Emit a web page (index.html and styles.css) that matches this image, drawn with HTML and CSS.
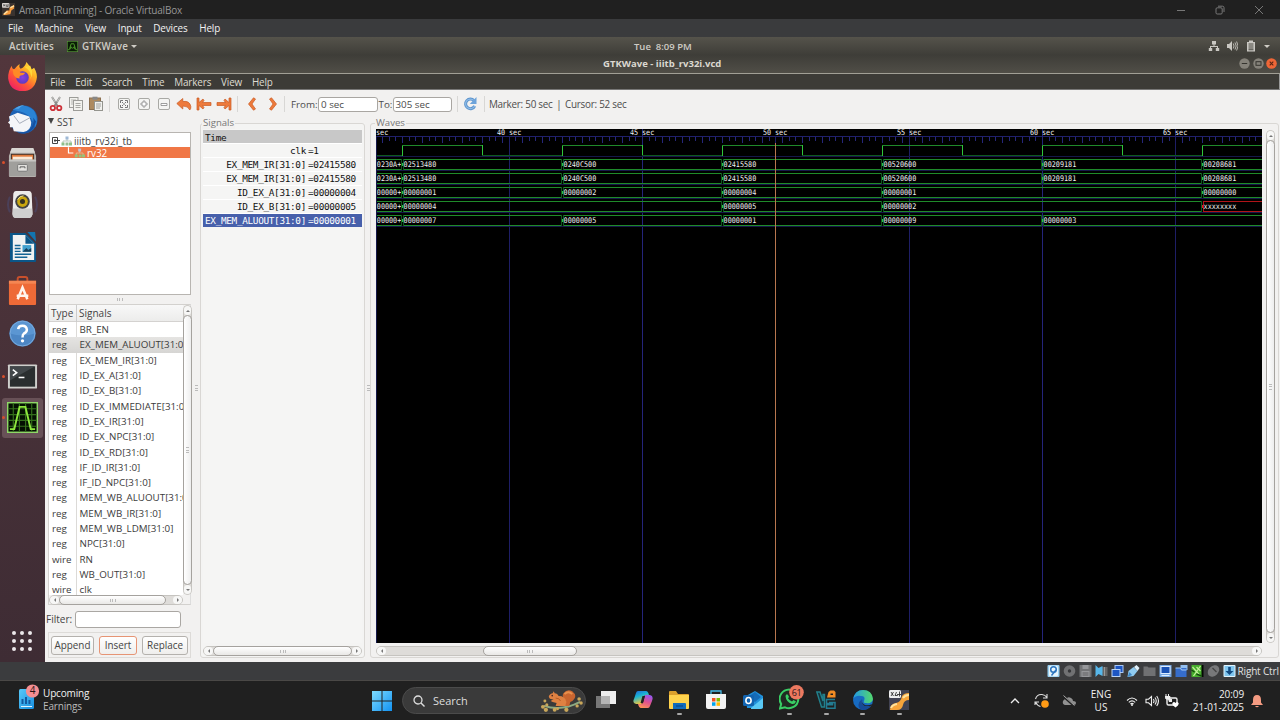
FILE: index.html
```html
<!DOCTYPE html>
<html lang="en">
<head>
<meta charset="utf-8">
<title>Amaan [Running] - Oracle VirtualBox</title>
<link rel="stylesheet" href="styles.css">
</head>
<body>
<header class="vm-title">
  <svg class="vm-logo" viewBox="0 0 14 14"><rect width="14" height="14" fill="#3a332f"/><path d="M1 13 5 8 8 8 8 5 13 2V6L10 8 9 12 4 13Z" fill="#f59a3c"/><path d="M2 12 6 9M9 5 13 3" stroke="#ffe0a0" stroke-width="1.5"/><rect width="8" height="5" rx="1" fill="#d8d4d0"/><path d="M1.5 1.5 3 3.5M3 1.5 1.500 3.500M4.500 1.500v2h2M6.500 1v3" stroke="#333" stroke-width=".8" fill="none"/></svg>
  <span class="vm-title-text">Amaan [Running] - Oracle VirtualBox</span>
  <div class="vm-controls">
    <svg viewBox="0 0 10 10"><path d="M1 5.500h8"/></svg>
    <svg viewBox="0 0 10 10"><rect x="1" y="2.800" width="6.200" height="6.200" rx="1.200"/><path d="M3 1.200h4.500q1.500 0 1.500 1.500v4.300"/></svg>
    <svg viewBox="0 0 10 10"><path d="M1 1l8 8M9 1l-8 8"/></svg>
  </div>
</header>
<nav class="vm-menu"><span>File</span><span>Machine</span><span>View</span><span>Input</span><span>Devices</span><span>Help</span></nav>

<div class="gnome-bar">
  <span class="activities">Activities</span>
  <svg class="gw-mini" viewBox="0 0 12 12"><rect width="12" height="12" fill="#5c9a3c"/><rect x=".7" y=".7" width="10.600" height="10.600" fill="#0a1c06"/><path d="M1 9.500h1.500L4.500 3h3l2 6.500H11M4 9V6l2 2 2-2v3" fill="none" stroke="#4f9a2c"/></svg>
  <span class="app-name">GTKWave</span><i class="caret"></i>
  <span class="clock">Tue&nbsp; 8:09 PM</span>
  <div class="gnome-tray">
    <svg viewBox="0 0 12 12"><path d="M4 1h4v3.500H4zM.8 8h3.400v3H.8zM7.800 8h3.400v3H7.800zM5.500 4h1v2.500h-1zM2 6h8v1H2zM2 6h1v2H2zM9 6h1v2H9z"/></svg>
    <svg viewBox="0 0 12 12"><path d="M1 4h2l3-3v10L3 8H1z"/><path d="M7.300 3.500q1.500 2.500 0 5M9 2.500q2.400 3.500 0 7M10.600 1.500q3 4.500 0 9" fill="none" stroke="#c9c7c2" stroke-width=".9"/></svg>
    <svg viewBox="0 0 12 12"><path d="M2 2h2V.6h4V2h2v9.600H2zM3.500 3.500v1h5v-1zM3.500 5.500v1h5v-1zM3.500 7.500v1h5v-1zM3.500 9.300v1h5v-1z" fill-rule="evenodd"/></svg>
    <i class="caret"></i>
  </div>
</div>

<main class="desktop">
  <aside class="dock">
    <div class="dock-item"><svg viewBox="0 0 32 32">
      <defs><linearGradient id="ff" x1="1" y1="0" x2=".2" y2="1"><stop offset="0" stop-color="#fff14d"/><stop offset=".35" stop-color="#ffb023"/><stop offset=".65" stop-color="#ff5a35"/><stop offset="1" stop-color="#ef1c68"/></linearGradient><radialGradient id="ffp"><stop offset="0" stop-color="#8a3fe0"/><stop offset="1" stop-color="#5f3bc0"/></radialGradient></defs>
      <path d="M20 1q4 4 5 8l3-2q4 7 2.500 12Q28 31 16 31 3 31 1.200 18 1 10 5 5q0 4 3 3 2-3 5-5-1 3 1 5 5-2 6-7Z" fill="url(#ff)"/><circle cx="16" cy="17" r="6.500" fill="url(#ffp)"/><path d="M6 9q5-1 8 3h5q-2 3-5 3-2 1-1 3-7 0-7-9Z" fill="#ff8a26"/><path d="M18 6q9 5 6 13 4-6 0-14Z" fill="#ffd83a"/></svg></div>
    <div class="dock-item"><svg viewBox="0 0 32 32">
      <circle cx="17" cy="16" r="14.500" fill="#1d62b4"/><path d="M6 6Q17-3 28 7q5 9 1 17-4-15-19-17Z" fill="#2a83d5"/><path d="M8 5Q13 1 18 1q-4 1-6 4Z" fill="#55a6e6"/><path d="m2 13 1 4-2 2 2 2 0 3 3 0 1 4 10 1q8-2 8-10l-2-6-12-4Z" fill="#f4f5f8"/><path d="m7 12 6 8 11-6" fill="none" stroke="#a3a9b8"/><path d="M27 14q2 9-7 15l-9 1q15 3 19-12Z" fill="#1550a0"/></svg></div>
    <div class="dock-item run"><svg viewBox="0 0 32 32">
      <path d="M5 1h22l3 8v21q0 1-1 1H3q-1 0-1-1V9Z" fill="#b6b4b0"/><path d="M5 1h22l2 5H3Z" fill="#d8d6d2"/><rect x="4" y="7" width="24" height="8" fill="#3d302a"/><path d="M5 8h22v7H5z" fill="#e07a3c"/><path d="M6 10h20v5H6z" fill="#fbe9d6"/><path d="M2 13h28v17H2z" fill="#a09f9c"/><path d="M2 13h28v2H2z" fill="#c6c5c2"/><rect x="11" y="18" width="10" height="7" rx="1" fill="#e4e3e0" stroke="#777"/><path d="M13.500 22v-1.500h5V22" fill="none" stroke="#555"/></svg></div>
    <div class="dock-item"><svg viewBox="0 0 32 32">
      <path d="M3 8q-4 8 0 16M29 8q4 8 0 16" stroke="#4b4059" stroke-width="2" fill="none"/><path d="M9 2h14q2 0 2.500 3l.8 20q0 4-4 5H9.700q-4-1-4-5l.8-20Q7 2 9 2Z" fill="#ececea"/><path d="M6 20h20l.3 6q-1 4-4 4H9.700q-4 0-4-4Z" fill="#cfcfcf"/><circle cx="16" cy="13" r="7.500" fill="#424344"/><circle cx="16" cy="13" r="5.500" fill="#c9a60e"/><circle cx="16" cy="13" r="2.600" fill="#363222"/><path d="M11 11q2-4 6-4" stroke="#f6e68a" fill="none"/></svg></div>
    <div class="dock-item"><svg viewBox="0 0 32 32">
      <path d="M3 1h16l11 11v18q0 1-1 1H3z" fill="#0b5688"/><path d="M21 0h8l1 10Z" fill="#1275b0"/><path d="M6 3h13l9 9v17H6z" fill="#f0f2f2"/><path d="M19 3v9h9Z" fill="#0b5688"/><path d="M8 14h6M8 17h6M8 20h6M8 23h17M8 26h13" stroke="#116394" stroke-width="1.500"/><rect x="16" y="13.500" width="9" height="7" fill="#42a1cf"/><path d="m16 20.500 4-4 2 2 3-2v4z" fill="#16415e"/></svg></div>
    <div class="dock-item"><svg viewBox="0 0 32 32">
      <path d="M11 9V4q0-2 2-2h6q2 0 2 2v5" fill="none" stroke="#c8502c" stroke-width="2"/><path d="M2 6h28v24q0 1-1 1H3q-1 0-1-1Z" fill="#ee6a37"/><path d="M2 6h28v3H2z" fill="#f58653"/><path d="m11 25 5-12 5 12M10 21.500h12" fill="none" stroke="#fff4ec" stroke-width="2.600"/></svg></div>
    <div class="dock-item"><svg viewBox="0 0 32 32">
      <circle cx="16" cy="16" r="13.500" fill="#4c86c4"/><path d="M3 16a13 13 0 0 1 26 0q-13 4-26 0Z" fill="#5b96d2"/><circle cx="16" cy="16" r="12.800" fill="none" stroke="#79aadd"/><path d="M11.500 11.500Q12 8 16 8t4.500 4q0 2.500-3 4-1.500 1-1.500 4" fill="none" stroke="#fff" stroke-width="2.600"/><circle cx="16" cy="23.600" r="1.700" fill="#fff"/></svg></div>
    <div class="dock-item run"><svg viewBox="0 0 32 32">
      <rect x="1" y="3.500" width="30" height="25" rx="1" fill="#cfcfcc"/><rect x="3" y="5.500" width="26" height="21" fill="#2a2e2f"/><path d="M3 5.500h26L3 20z" fill="#42474a"/><path d="m6 9 4 3-4 3" fill="none" stroke="#fff" stroke-width="1.600"/><path d="M12 17h6" stroke="#fff" stroke-width="1.600"/></svg></div>
    <div class="dock-item run active"><svg viewBox="0 0 32 32">
      <rect width="32" height="32" fill="#8fd867"/><rect x="1.500" y="1.500" width="29" height="29" fill="#041002"/><path d="M6.500 1v30M12.800 1v30M19.200 1v30M25.500 1v30M1 7h30M1 13h30M1 19h30M1 25h30" stroke="#34701c" stroke-width="1.200"/><path d="M3 28h4.500L13 5h6l5.500 23H29" fill="none" stroke="#8ee83e" stroke-width="2"/></svg></div>
    <svg class="apps-grid" viewBox="0 0 22 22"><g fill="#ece8ea"><circle cx="3" cy="3" r="2"/><circle cx="11" cy="3" r="2"/><circle cx="19" cy="3" r="2"/><circle cx="3" cy="11" r="2"/><circle cx="11" cy="11" r="2"/><circle cx="19" cy="11" r="2"/><circle cx="3" cy="19" r="2"/><circle cx="11" cy="19" r="2"/><circle cx="19" cy="19" r="2"/></g></svg>
  </aside>

  <section class="window">
    <div class="window-title"><span class="window-name">GTKWave - iiitb_rv32i.vcd</span>
      <div class="window-controls">
        <svg viewBox="0 0 11 11"><circle cx="5.500" cy="5.500" r="5.200" fill="#85827a"/><path d="M2.800 5.500h5.400" stroke="#35342f"/></svg>
        <svg viewBox="0 0 11 11"><circle cx="5.500" cy="5.500" r="5.200" fill="#85827a"/><rect x="3" y="3.700" width="5" height="3.600" fill="none" stroke="#35342f"/></svg>
        <svg viewBox="0 0 11 11"><circle cx="5.500" cy="5.500" r="5.300" fill="#ee6637"/><path d="m3.700 3.700 3.600 3.600m0-3.600L3.700 7.300" stroke="#5a2412" stroke-width="1.100"/></svg>
      </div>
    </div>
    <nav class="app-menu"><span>File</span><span>Edit</span><span>Search</span><span>Time</span><span>Markers</span><span>View</span><span>Help</span></nav>

    <div class="toolbar">
      <svg viewBox="0 0 16 16"><path d="m4 1 5.500 9M12 1 6.500 10" stroke="#8c8c8a" stroke-width="1.900"/><path d="m4 1 3 5M12 1 9 6" stroke="#d0d0ce" stroke-width=".8"/><circle cx="4.800" cy="12" r="2.200" fill="none" stroke="#cc3038" stroke-width="1.800"/><circle cx="11.200" cy="12" r="2.200" fill="none" stroke="#cc3038" stroke-width="1.800"/></svg>
      <svg viewBox="0 0 16 16"><g fill="#f2f2ee" stroke="#9c9c98"><rect x="1.500" y="1.500" width="8.500" height="10"/><path d="M3 4h5M3 6h5M3 8h5" stroke="#b4b4b0"/><rect x="5.500" y="4.500" width="9" height="10"/><path d="M7.500 7.500h5M7.500 9.500h5M7.500 11.500h5" stroke="#a8a8a4"/></g></svg>
      <svg viewBox="0 0 16 16"><rect x="1.500" y="2" width="11" height="11.500" fill="#ad8a60" stroke="#8c7050"/><rect x="4.500" y=".7" width="5" height="3" fill="#888"/><rect x="6.500" y="5.500" width="8" height="9" fill="#f1f1ee" stroke="#94948e"/><path d="M8 8h5M8 10h5M8 12h4" stroke="#a0a09c"/></svg>
      <i class="tool-sep wide-sep"></i>
      <svg viewBox="0 0 16 16"><rect x="2.500" y="2.500" width="11" height="11" rx="1.500" fill="#f5f5f3" stroke="#a9a9a5"/><path d="M4.500 7V4.500H7M9 4.500h2.500V7M11.500 9v2.500H9M7 11.500H4.500V9M6 6l1.500 1.500M10 6 8.500 7.500M6 10l1.500-1.500M10 10 8.500 8.500" fill="none" stroke="#777"/></svg>
      <svg viewBox="0 0 16 16"><rect x="2.500" y="2.500" width="11" height="11" rx="1.500" fill="#f5f5f3" stroke="#a9a9a5"/><path d="M5 7h2V5h2v2h2v2H9v2H7V9H5z" fill="#fff" stroke="#888" stroke-width=".8"/></svg>
      <svg viewBox="0 0 16 16"><rect x="2.500" y="2.500" width="11" height="11" rx="1.500" fill="#f5f5f3" stroke="#a9a9a5"/><path d="M5 7.500h6v2H5z" fill="#fff" stroke="#888" stroke-width=".8"/></svg>
      <svg viewBox="0 0 16 16" class="arrow"><path d="m.8 7.500 6-5v3q7-1 8 5 .3 2-1 3.500-1.500-4-7-4v3z"/></svg>
      <svg viewBox="0 0 16 16" class="arrow"><path d="M1 2h2v4.500L7 3l1 1.500-1.500 2H15v3H6.500l1.500 2L7 13 3 9.500V14H1z"/></svg>
      <svg viewBox="0 0 16 16" class="arrow"><path d="M15 2h-2v4.500L9 3 8 4.500l1.500 2H1v3h8.500l-1.500 2L9 13l4-3.500V14h2z"/></svg>
      <i class="tool-sep wide-sep"></i>
      <svg viewBox="0 0 16 16" class="arrow"><path d="M9.500 1.800 11.500 3 8 8l3.500 5-2 1.200L4.500 8z"/></svg>
      <svg viewBox="0 0 16 16" class="arrow next"><path d="M6.500 1.800 4.500 3 8 8l-3.500 5 2 1.200L11.500 8z"/></svg>
      <i class="tool-sep"></i>
      <span class="tool-label from">From:</span><span class="entry">0 sec</span>
      <span class="tool-label to">To:</span><span class="entry">305 sec</span>
      <i class="tool-sep"></i>
      <svg viewBox="0 0 16 16" class="reload"><path d="M12 4.700A4.800 4.800 0 1 0 12.700 10" fill="none" stroke="#5b93cc" stroke-width="3"/><path d="M12 4.700A4.800 4.800 0 1 0 12.700 10" fill="none" stroke="#8fbbe6" stroke-width="1.200"/><path d="M14.500 1v7H7.800z" fill="#6da3da"/></svg>
      <i class="tool-sep"></i>
      <span class="marker-text">Marker: 50 sec&thinsp; |&thinsp; Cursor: 52 sec</span>
    </div>

    <div class="panes">
      <section class="sst">
        <div class="sst-head"><i class="expander"></i>SST</div>
        <div class="tree">
          <div class="tree-row"><svg viewBox="0 0 22 12"><path d="M2.500 2.500h5v6h-5zM4 5.500h6M5 4v3" fill="none" stroke="#444"/><path d="M13 9V6h8v3M17 6V3" fill="none" stroke="#b9c6b9"/><g fill="#8fbf88"><rect x="11.500" y="7.500" width="3" height="3"/><rect x="19" y="7.500" width="3" height="3"/></g><rect x="15.500" y="7.500" width="3" height="3" fill="#98bc92"/><rect x="15.500" y="1.500" width="3" height="3" fill="#9fb9d6"/></svg>iiitb_rv32i_tb</div>
          <div class="tree-row selected"><svg viewBox="0 0 36 12"><path d="M19 0v6h5" fill="none" stroke="#fff" stroke-width="1.200"/><path d="M27 9V6h7v3M30.500 6V3" fill="none" stroke="#e0b78e"/><g fill="#92c57c"><rect x="25.500" y="7.500" width="3" height="3"/><rect x="29.500" y="7.500" width="3" height="3"/><rect x="33" y="7.500" width="3" height="3"/></g><rect x="29" y="1.500" width="3" height="3" fill="#c3c5d6"/></svg>rv32</div>
        </div>
        <div class="grip"></div>
        <div class="siglist">
          <div class="sig-view">
            <div class="sig-head"><span>Type</span><span>Signals</span></div>
            <div class="sig-row"><span>reg</span><span>BR_EN</span></div>
            <div class="sig-row current"><span>reg</span><span>EX_MEM_ALUOUT[31:0]</span></div>
            <div class="sig-row"><span>reg</span><span>EX_MEM_IR[31:0]</span></div>
            <div class="sig-row"><span>reg</span><span>ID_EX_A[31:0]</span></div>
            <div class="sig-row"><span>reg</span><span>ID_EX_B[31:0]</span></div>
            <div class="sig-row"><span>reg</span><span>ID_EX_IMMEDIATE[31:0]</span></div>
            <div class="sig-row"><span>reg</span><span>ID_EX_IR[31:0]</span></div>
            <div class="sig-row"><span>reg</span><span>ID_EX_NPC[31:0]</span></div>
            <div class="sig-row"><span>reg</span><span>ID_EX_RD[31:0]</span></div>
            <div class="sig-row"><span>reg</span><span>IF_ID_IR[31:0]</span></div>
            <div class="sig-row"><span>reg</span><span>IF_ID_NPC[31:0]</span></div>
            <div class="sig-row"><span>reg</span><span>MEM_WB_ALUOUT[31:0]</span></div>
            <div class="sig-row"><span>reg</span><span>MEM_WB_IR[31:0]</span></div>
            <div class="sig-row"><span>reg</span><span>MEM_WB_LDM[31:0]</span></div>
            <div class="sig-row"><span>reg</span><span>NPC[31:0]</span></div>
            <div class="sig-row"><span>wire</span><span>RN</span></div>
            <div class="sig-row"><span>reg</span><span>WB_OUT[31:0]</span></div>
            <div class="sig-row"><span>wire</span><span>clk</span></div>
          </div>
          <div class="vscroll"><i class="up"></i><b></b><i class="down"></i></div>
          <div class="hscroll"><i class="left"></i><b class="thumb-sst"></b><i class="right"></i></div>
        </div>
        <div class="filter"><span>Filter:</span><i></i></div>
        <div class="buttons"><span class="b-append">Append</span><span class="b-insert">Insert</span><span class="b-replace">Replace</span></div>
      </section>
      <div class="vgrip"></div>

      <section class="frame signals"><h2>Signals</h2>
        <div class="names">
          <div class="time-row">Time</div>
          <div class="name-row"><span>clk</span><span>=1</span></div>
          <div class="name-row"><span>EX_MEM_IR[31:0]</span><span>=02415580</span></div>
          <div class="name-row"><span>EX_MEM_IR[31:0]</span><span>=02415580</span></div>
          <div class="name-row"><span>ID_EX_A[31:0]</span><span>=00000004</span></div>
          <div class="name-row"><span>ID_EX_B[31:0]</span><span>=00000005</span></div>
          <div class="name-row picked"><span>EX_MEM_ALUOUT[31:0]</span><span>=00000001</span></div>
        </div>
        <div class="hscroll"><i class="left"></i><b class="thumb-names"></b><i class="right"></i></div>
      </section>
      <div class="vgrip second"></div>

      <section class="frame waves"><h2>Waves</h2>
        <svg id="wave" class="wave" viewBox="376 129 886 514"></svg>
        <div class="vscroll"><i class="up"></i><b></b><i class="down"></i></div>
        <div class="hscroll"><i class="left"></i><b class="thumb-waves"></b><i class="right"></i></div>
      </section>
    </div>
  </section>
</main>

<div class="vm-status">
  <svg viewBox="0 0 12 12"><rect width="12" height="12" rx="1" fill="#9bd2f3"/><rect x="1.500" y=".8" width="9" height="10.500" rx="1.500" fill="#e7f5fd"/><circle cx="6" cy="4.500" r="2.800" fill="none" stroke="#2b74be" stroke-width="1.500"/><path d="M8.500 5 4 10.500" stroke="#2b74be" stroke-width="1.500"/></svg>
  <svg viewBox="0 0 12 12"><circle cx="6" cy="6" r="5.800" fill="#707173"/><circle cx="6" cy="6" r="1.700" fill="#36373a"/></svg>
  <svg viewBox="0 0 12 12"><path d="M0 0h12v12H0z" fill="#737476"/><path d="M3 0h6v4H3zM2 6h8v6H2z" fill="#96979a"/><path d="M3 8h6M3 10h6" stroke="#606163"/></svg>
  <svg viewBox="0 0 12 12"><path d="M6 2h6v9H7z" fill="#666"/><path d="M0 0 3 3l4-2v10L3 9l-3 3z" fill="#57b7ea"/><path d="M9 2v9" stroke="#999"/></svg>
  <svg viewBox="0 0 12 12"><rect x="3.500" y=".5" width="8" height="7" fill="#1d56c4" stroke="#a9c8f5"/><rect x=".5" y="4.500" width="8" height="7" fill="#1d56c4" stroke="#b9d4f8"/></svg>
  <svg viewBox="0 0 12 12"><path d="m0 12 1-6 5-4 4 4-4 5z" fill="#8fcbf1"/><path d="m6.500 2 2.500-2 3 3-2 3z" fill="#e2f3fd"/><path d="m0 12 2-5 2.500 3z" fill="#3c88c8"/></svg>
  <svg viewBox="0 0 12 12"><path d="M0 1.500h4l1 1h7V11H0z" fill="#707173"/></svg>
  <svg viewBox="0 0 12 12"><rect width="12" height="12" fill="#79a9e4"/><rect x="1.500" y="1.500" width="9" height="7" fill="#1951b5" stroke="#dcecff"/><path d="M2 10.500h8" stroke="#e0eeff"/></svg>
  <svg viewBox="0 0 12 12"><rect x="5" width="7" height="5" fill="#93bff0"/><rect y="3" width="11" height="9" fill="#366dcb"/><path d="M0 3h5l1 2h5" stroke="#a6cdf8" fill="none"/></svg>
  <svg viewBox="0 0 12 12"><rect x="8" width="4" height="12" fill="#050805"/><path d="M0 0h10v12H0z" fill="#46ae2d"/><path d="m1 2 7 8M9 1 2 11M5 2l4 4" stroke="#c1f29b" stroke-width="1.300"/><path d="m0 5 3 2M5 9l5 2" stroke="#12490d" stroke-width="1.500"/></svg>
  <svg viewBox="0 0 12 12"><ellipse cx="6" cy="6" rx="6.500" ry="4.800" transform="rotate(-45 6 6)" fill="#77787a"/><path d="m5 3 4 4" stroke="#444" stroke-width="1.200"/></svg>
  <svg viewBox="0 0 12 12"><rect width="12" height="12" rx="1" fill="#e3f4fd"/><rect x="1" y="1" width="10" height="10" fill="#80c6ef"/><path d="M4.700 2h2.600v4H10l-4 4-4-4h2.700z" fill="#114a82"/></svg>
  <span>Right Ctrl</span>
</div>

<footer class="taskbar">
  <div class="widget">
    <svg viewBox="0 0 24 26"><defs><linearGradient id="wd" x2="1" y2="1"><stop stop-color="#58c9f8"/><stop offset="1" stop-color="#188fe0"/></linearGradient></defs><rect x="2" y="5" width="15" height="20" rx="1.500" fill="url(#wd)"/><path d="M4.500 20v-5h2v5zM8 20v-7h2v7zM11.500 20v-4h2v4z" fill="#145b9f"/><path d="M4 22h11v1H4z" fill="#e0f4ff"/><circle cx="15.500" cy="7" r="6.600" fill="#f48e92"/><text x="15.500" y="10.400" text-anchor="middle" class="badge-text">4</text></svg>
    <div class="widget-text"><span>Upcoming</span><span class="sub">Earnings</span></div>
  </div>
  <div class="task-center">
    <svg class="start" viewBox="0 0 20 20"><defs><linearGradient id="win" x2="1" y2="1"><stop stop-color="#7edcff"/><stop offset="1" stop-color="#1292f2"/></linearGradient></defs><path d="M0 0h9.500v9.500H0zM10.500 0H20v9.500h-9.500zM0 10.500h9.500V20H0zM10.500 10.500H20V20h-9.500z" fill="url(#win)"/></svg>
    <div class="search"><svg class="lens" viewBox="0 0 12 12"><circle cx="5" cy="5" r="4" fill="none" stroke="#dedede" stroke-width="1.300"/><path d="m8 8 3.500 3.500" stroke="#dedede" stroke-width="1.400"/></svg><span>Search</span>
      <svg class="squirrel" viewBox="0 0 44 24"><path d="M4 17q18 6 37-4" fill="none" stroke="#8ca982" stroke-width="2"/><path d="M25 17q3-5 0-7-3-3-1-6 4-5 9-2 5 4 2 8-2 3-4 3l-1 4Z" fill="#c9652f"/><path d="M25 5q4-4 8 0" stroke="#e8904c" stroke-width="2" fill="none"/><path d="M9 8q0-3 4-4l1-2 1 2q3 0 4 3 7 0 8 6l-1 4H16l1-3-4-1-2-1 3-2q-4 1-5-2Z" fill="#df8142"/><path d="M16 9q4 0 5 3" stroke="#b45a24" fill="none"/><circle cx="12.500" cy="6.500" r=".8" fill="#422"/><g fill="#c9a75a"><circle cx="3" cy="18" r="2"/><circle cx="7" cy="16" r="1.600"/><circle cx="6" cy="21" r="2.200"/><circle cx="15" cy="21" r="2"/><circle cx="18" cy="20" r="1.500"/><circle cx="27" cy="21" r="2.200"/><circle cx="40" cy="10" r="1.800"/><circle cx="42" cy="14" r="1.800"/><circle cx="38" cy="17" r="1.700"/><circle cx="5" cy="12" r="1.500"/></g></svg>
    </div>
    <div class="apps">
      <div><svg viewBox="0 0 20 20"><rect y="6" width="14" height="12" fill="#777"/><rect x="5" y="1" width="15" height="13" fill="#eee"/><path d="M5 6h9v8H5z" fill="#b5b5b5"/></svg></div>
      <div><svg viewBox="0 0 20 20"><defs><linearGradient id="cp1" x2=".4" y2="1"><stop stop-color="#2563db"/><stop offset=".45" stop-color="#19b6d3"/><stop offset="1" stop-color="#f3c33b"/></linearGradient><linearGradient id="cp2" x1=".7" x2=".3" y2="1"><stop stop-color="#9457ef"/><stop offset=".5" stop-color="#e0518f"/><stop offset="1" stop-color="#ff9157"/></linearGradient></defs><path d="M5 1h8q2 0 3 4h-3q-2 0-3 4l-1.500 5H3q-4-1-2-5L3 3q.5-2 2-2Z" fill="url(#cp1)"/><path d="M15 18H8q-2 0-3-4h3q2 0 2.500-3L12 5h5q4 1 2 6l-2 5q-.5 2-2 2Z" fill="url(#cp2)"/><path d="m9.500 6h2.500l-2 7H7.500z" fill="#222"/></svg></div>
      <div class="open"><svg viewBox="0 0 20 20"><path d="M0 2q0-1 1-1h6l2 3h10q1 0 1 1v13H0z" fill="#dca02c"/><path d="M0 5h20v13q0 1-1 1H1q-1 0-1-1z" fill="#ffd34d"/><path d="M4 13h12q1 0 1 1v5H4z" fill="#126bbb"/><path d="M7 16h7" stroke="#0b4e96" stroke-width="1.500"/></svg></div>
      <div><svg viewBox="0 0 20 20"><path d="M5 5V1h10v4" fill="none" stroke="#46b9e7" stroke-width="1.300"/><path d="M0 4h20v13q0 2-2 2H2q-2 0-2-2z" fill="#f3f3f3"/><path d="M6 8h3.500v3.500H6z" fill="#f25022"/><path d="M10.500 8H14v3.500h-3.500z" fill="#7fba00"/><path d="M6 12.300h3.500v3.500H6z" fill="#00a4ef"/><path d="M10.500 12.300H14v3.500h-3.500z" fill="#ffb900"/></svg></div>
      <div><svg viewBox="0 0 20 20"><path d="M3 6 12 1l8 5v12H4z" fill="#2091db"/><path d="m5 7 7-5 6 5-6 5z" fill="#156bb7"/><path d="m8 18 12-10v9q0 2-2 2H8z" fill="#59c9f5"/><rect y="5" width="11" height="11" rx="1.500" fill="#1264b0"/><ellipse cx="5.500" cy="10.500" rx="2.600" ry="3" fill="none" stroke="#fff" stroke-width="1.600"/></svg></div>
      <div class="open"><svg class="wide" viewBox="0 0 25 25"><path d="m1 23.500 1.200-4.500A9.300 9.300 0 1 1 6 22.300z" fill="#202b22" stroke="#39cf65" stroke-width="2"/><path d="M6.500 11q1-3 2.500-1l1 2-1 1.300q1.500 2.500 4 3.200l1.500-1.500 2.500 1.500q-1 3-4 2.500-6-2-6.500-8" fill="#39cf65"/><circle cx="17.500" cy="7.300" r="7.300" fill="#ed7960"/><text x="17.500" y="10.700" text-anchor="middle" class="badge-text tight">61</text></svg></div>
      <div class="open"><svg viewBox="0 0 20 20"><path d="M.8 2H4l3 9V4.500h1.500V17H5.500Z" fill="#17333a" stroke="#22808c" stroke-width="1.400"/><path d="M19 9.500h-8.500v4h6v1.200h-6v3.500H19v-5.700h-6" fill="none" stroke="#227c92" stroke-width="1.500"/><path d="M11 7.500 12.500 2l2-1.500H18L19.500 2v5.500zM14.500 3.500V5h2.500V3.500z" fill="#f18c25" fill-rule="evenodd"/></svg></div>
      <div class="open"><svg viewBox="0 0 20 20"><defs><linearGradient id="ed" x2="1"><stop stop-color="#2398e5"/><stop offset="1" stop-color="#54d96b"/></linearGradient></defs><circle cx="10" cy="10" r="10" fill="#176bc2"/><path d="M0 9Q2 0 10 0q9 0 10 9-1 5-7 4-3 0-2-2 2-5-3-5Q3 5 0 9Z" fill="url(#ed)"/><path d="M9 9q-2 7 9 7-5 6-11 3-4-5 2-10Z" fill="#164a96"/><path d="M10 9q-2 4 2 6 4 1 7-1-1 3-3 2-9 1-6-7Z" fill="#222"/></svg></div>
      <div class="open"><svg viewBox="0 0 20 20"><rect width="20" height="20" fill="#424353"/><path d="M1 20q0-6 6-7 5-1 6-7 2-3 7-3v7q-5 0-6 5t-6 5z" fill="#f7a43b"/><path d="M2 18q1-3 6-4M14 8q2-3 6-3" stroke="#ffe29d" stroke-width="2" fill="none"/><rect width="12" height="8" rx="1.500" fill="#eee"/><path d="m2 2 2.500 4M4.500 2 2 6M7.500 2 6 5.500h2.500V4M10.500 1.500v5M9 4.500h3" stroke="#333" stroke-width=".9" fill="none"/></svg></div>
    </div>
  </div>
  <div class="tray">
    <svg class="t-up" viewBox="0 0 12 12"><path d="m2 8 4-4 4 4" fill="none" stroke="#eee" stroke-width="1.300"/></svg>
    <svg class="t-sync" viewBox="0 0 15 15"><path d="M1.500 6Q3 1 8 1.500q3 .3 5 3M13 1v4H9M1 12V9h4M1.500 9q2 4 5 4.500" fill="none" stroke="#ddd" stroke-width="1.100"/><circle cx="11" cy="11" r="3.800" fill="#ff9b16"/></svg>
    <svg class="t-cloud" viewBox="0 0 14 14"><path d="M3 11q-3-1-2-4 1-2 3-2 2-3 5-1 2 1 2 3 3 0 3 2 0 2-2 2z" fill="#919191"/><path d="m1 2 11 10" stroke="#222" stroke-width="2.300"/><path d="m1.500 1.500 11 10" stroke="#aaa"/></svg>
    <div class="lang"><span>ENG</span><span>US</span></div>
    <svg class="t-wifi" viewBox="0 0 12 12"><path d="M1 5.500q5-5 10 0M2.800 7.400q3.200-3 6.400 0M4.400 9q1.600-1.300 3.200 0" fill="none" stroke="#eee" stroke-width="1.100"/><circle cx="6" cy="10" r="1" fill="#eee"/></svg>
    <svg class="t-sound" viewBox="0 0 14 14"><path d="M1 5.200h2.500L6.500 2.500v9L3.500 8.800H1zM8.300 5q1.500 2 0 4M10 3.500q2.500 3.500 0 7M11.700 2q3.500 5 0 10" fill="none" stroke="#eee" stroke-width="1.100"/></svg>
    <svg class="t-bat" viewBox="0 0 14 14"><rect x="2" y="4" width="10" height="7" rx="1.500" fill="none" stroke="#eee" stroke-width="1.400"/><path d="M3 5h4v3H4z" fill="#eee"/><path d="M1 0v3M3.500 0v3M0 2.500h5V5H1z" fill="#eee" stroke="#eee"/><path d="M10.500 13.500q-4-2.500-3-4.500 1.500-2 3 0 1.500-2 3 0 1 2-3 4.500" fill="#fff"/></svg>
    <div class="datetime"><span>20:09</span><span>21-01-2025</span></div>
    <svg class="t-bell" viewBox="0 0 12 14"><path d="M6 1q4 0 4 5v2.500L12 11H0l2-2.500V6q0-5 4-5ZM4 12h4q-2 2.500-4 0Z" fill="#f49b82"/></svg>
  </div>
</footer>
<script src="waves.js"></script>
</body>
</html>
```

FILE: styles.css
```css
* { box-sizing: border-box; }
html, body { margin: 0; width: 1280px; height: 720px; overflow: hidden; }
body { display: flex; flex-direction: column; font-family: "Open Sans", "Noto Sans", sans-serif; font-size: 10px; background: #202020; color: #444; }
svg { display: block; flex: none; }
span { white-space: nowrap; }

/* Host window */
.vm-title { height: 19px; flex: none; display: flex; align-items: center; background: #202020; color: #969696; padding-left: 2px; }
.vm-logo { width: 13px; height: 13px; }
.vm-title-text { margin-left: 4px; font-size: 10px; letter-spacing: -.2px; }
.vm-controls { margin-left: auto; display: flex; gap: 29px; padding-right: 16px; }
.vm-controls svg { width: 10px; height: 10px; fill: none; stroke: #777; }
.vm-menu { height: 18px; flex: none; display: flex; align-items: center; gap: 11.700px; padding-left: 8px; background: #3a3b3d; color: #f2f2f2; font-size: 9.900px; letter-spacing: -.12px; }

/* Guest top bar */
.gnome-bar { height: 18px; flex: none; position: relative; display: flex; align-items: center; padding-left: 9px; background: linear-gradient(#55534b, #3e3d38); color: #cfccc5; font-weight: 600; font-size: 9.500px; }
.activities, .app-name { font-size: 9.800px; letter-spacing: .2px; }
.gw-mini { width: 11px; height: 11px; margin: 0 4px 0 13px; }
.caret { border: 3px solid transparent; border-top: 3.500px solid #cfccc5; border-bottom: 0; margin-left: 3px; }
.clock { position: absolute; left: 634px; }
.gnome-tray { margin-left: auto; display: flex; align-items: center; gap: 6.500px; padding-right: 10px; }
.gnome-tray svg { width: 12px; height: 12px; fill: #c9c7c2; }
.gnome-tray .caret { margin-left: 1px; }

.desktop { height: 607px; flex: none; display: grid; grid-template-columns: 45px 1235px; }
.dock { background: linear-gradient(#52363c, #493239 45%, #3e2c34); display: flex; flex-direction: column; align-items: center; padding-right: 1px; }
.dock-item { width: 44px; height: 42.850px; flex: none; display: flex; align-items: center; justify-content: center; position: relative; }
.dock-item svg { width: 31px; height: 31px; }
.dock-item.run::before { content: ""; position: absolute; left: 1.500px; top: 20px; width: 3.500px; height: 3.500px; border-radius: 50%; background: #d94f2b; }
.dock-item.active { width: 41px; height: 40px; border-radius: 3px; background: #685157; }
.dock-item.active::before { left: 0; top: 18px; }
.apps-grid { width: 22px; height: 22px; margin: auto 0 10px; }

.window { display: flex; flex-direction: column; background: #f2f1f0; min-width: 0; }
.window-title { height: 19px; flex: none; position: relative; background: linear-gradient(#3e3d38, #504e47); border-bottom: 1px solid #a19f96; color: #dbd8d0; font-weight: 700; font-size: 9.500px; }
.window-name { position: absolute; left: 558px; top: 2px; letter-spacing: .02px; }
.window-controls { position: absolute; right: 3px; top: 3px; display: flex; gap: 2.500px; }
.window-controls svg { width: 11px; height: 11px; }
.app-menu { height: 16px; flex: none; display: flex; align-items: center; gap: 9.800px; padding-left: 5.300px; background: #3c3b37; border-bottom: 1px solid #777; border-right: 1px solid #999; color: #dfdbd2; font-size: 9.900px; letter-spacing: -.13px; }

.toolbar { height: 28px; flex: none; display: flex; align-items: center; padding-left: 1px; color: #4c4c4c; font-size: 9.800px; }
.toolbar svg { width: 16px; height: 16px; margin: 0 2px; }
.toolbar svg.arrow { fill: #ed7a3c; stroke: #c95a23; stroke-width: .7; }
.toolbar svg.next { margin: 0 1px 0 3px; }
.tool-sep { width: 1px; height: 16px; margin: 0 3px 0 2px; background: #d8d7d5; }
.tool-sep.wide-sep { margin: 0 4px 0 3px; }
.tool-label.from { margin-left: 3px; width: 27px; }
.tool-label.to { margin-left: 1px; width: 14px; }
.entry { width: 59.500px; height: 15px; border: 1px solid #a9a6a2; border-radius: 3px; background: #fff; padding-left: 2px; line-height: 13px; }
.toolbar .entry + .tool-sep { margin-left: 5px; }
.toolbar svg.reload { margin: 0 4px 0 1px; }
.marker-text { margin-left: 1px; font-size: 9.900px; letter-spacing: -.26px; }

.panes { flex: 1; min-height: 0; display: grid; grid-template-columns: 150px 5px 165px 5px 909px; }
.vgrip { background: repeating-linear-gradient(#bbb 0 1px, transparent 1px 2.500px) 0 267px / 3px 6px no-repeat; }
.vgrip.second { background-position-x: 2px; }

/* Hierarchy and signal list */
.sst { display: flex; flex-direction: column; padding-left: 3px; }
.sst-head { height: 14px; line-height: 9px; display: flex; gap: 3px; font-size: 10px; }
.expander { border: 3.500px solid transparent; border-top: 6px solid #444; border-bottom: 0; height: 6px; }
.tree { width: 142px; height: 163px; margin-left: 1px; background: #fff; border: 1px solid #b8b5b1; padding-top: 1px; }
.tree-row { height: 13px; display: flex; align-items: center; gap: 2px; line-height: 12px; font-size: 9.900px; }
.tree-row svg { height: 12px; }
.tree-row:first-child svg { width: 22px; }
.tree-row.selected { height: 11px; background: #f07746; color: #fff; }
.tree-row.selected svg { width: 35px; }
.grip { height: 9px; background: repeating-linear-gradient(90deg, #bbb 0 1px, transparent 1px 2.500px) 69px center / 6px 3px no-repeat; }
.siglist { width: 143px; height: 301px; display: grid; grid-template: 290px 10px / 134px 9px; border: 1px solid #d3d1ce; border-right-color: #ddd; }
.sig-view { background: linear-gradient(90deg, transparent 27px, #dcdad7 27px 28px, transparent 28px) #fff; overflow: hidden; }
.sig-head { height: 17px; display: grid; grid-template-columns: 27px 1fr; background: linear-gradient(#f8f8f8, #ececeb); border-bottom: 1px solid #d4d2d0; line-height: 17px; }
.sig-head span { padding-left: 2px; }
.sig-head span + span { border-left: 1px solid #ccc; }
.sig-row { height: 15.320px; display: grid; grid-template-columns: 27px 1fr; line-height: 15px; color: #3c3c3c; font-size: 9.800px; }
.sig-row span { padding-left: 3px; }
.sig-row span + span { padding-left: 3.500px; }
.sig-row.current { background: linear-gradient(#e5e4e2, #d6d5d3); }
.siglist .hscroll { grid-column: 1; }
.filter { height: 18px; margin: 5px 0 0 -2px; display: flex; align-items: center; gap: 3px; font-size: 10px; }
.filter i { width: 106px; height: 17px; background: #fff; border: 1px solid #aaa7a3; border-radius: 3px; }
.buttons { width: 143px; height: 26px; margin-top: 4px; display: flex; align-items: center; gap: 5px; padding: 0 2px; border: 1px solid #dddbd8; }
.buttons span { height: 19px; line-height: 17px; text-align: center; border: 1px solid #b4b1ad; border-radius: 3px; background: linear-gradient(#fff, #efeeec); font-size: 9.900px; }
.b-append { width: 43px; }
.buttons .b-insert { width: 38px; border: 1.500px solid #e69474; }
.b-replace { width: 46px; }

/* Scrollbars */
.hscroll, .vscroll { display: flex; background: #dedcd9; border: 1px solid #c6c4c0; border-radius: 5px; }
.hscroll { height: 10px; }
.vscroll { flex-direction: column; }
.hscroll i, .vscroll i { flex: none; display: flex; align-items: center; justify-content: center; background: #f7f7f6; border-radius: 5px; width: 9px; height: 8px; }
.vscroll i { width: 7px; height: 9px; }
.hscroll i::before, .vscroll i::before { content: ""; border: 2px solid transparent; }
.hscroll .left::before { border-right: 2.500px solid #777; border-left: 0; }
.hscroll .right { margin-left: auto; }
.hscroll .right::before { border-left: 2.500px solid #777; border-right: 0; }
.vscroll .up::before { border-bottom: 2.500px solid #777; border-top: 0; }
.vscroll .down::before { border-top: 2.500px solid #777; border-bottom: 0; }
.hscroll b, .vscroll b { border: 1px solid #a5a29e; border-radius: 5px; background: repeating-linear-gradient(90deg, #bbb 0 1px, transparent 1px 2.500px) center / 6px 3px no-repeat, linear-gradient(#fff, #e9e8e6); margin: -1px 0; }
.vscroll b { flex: 1; margin: 0 -1px; background: repeating-linear-gradient(#bbb 0 1px, transparent 1px 2.500px) center / 3px 6px no-repeat, linear-gradient(90deg, #fff, #eee); }
.thumb-sst { width: 107px; }
.thumb-names { flex: 1; }
.thumb-waves { width: 94px; margin-left: 97px !important; }

/* Framed panes */
.frame { position: relative; height: 540px; padding-top: 11px; display: flex; flex-direction: column; }
.frame::before { content: ""; position: absolute; inset: 5px 0 0; border: 1px solid #d9d7d4; border-radius: 3px; }
.frame h2 { position: absolute; left: 2px; top: -2px; margin: 0; padding: 0 1px; background: #f2f1f0; color: #777; font-weight: 400; font-size: 9.600px; line-height: 13px; }
.waves h2 { left: 5px; }
.signals { padding-left: 3px; background: linear-gradient(#f2f1f0 5px, #f4f4f3 5px); }
.names { width: 159px; height: 514px; padding-top: 1px; background: #f5f5f4; position: relative; font-family: "DejaVu Sans Mono", monospace; font-size: 9.400px; letter-spacing: -.33px; color: #111; }
.time-row { height: 13px; line-height: 15px; background: #c8c8c8; padding-left: 2px; }
.name-row { height: 14px; line-height: 13px; display: grid; grid-template-columns: 103px 1fr; column-gap: 2px; border-top: 1px solid #fff; }
.name-row span:first-child { text-align: right; }
.name-row.picked { background: #4760ab; color: #fff; }
.frame .hscroll { position: relative; width: 159px; margin-top: 3px; }
.waves { display: grid; grid-template: 514px 13px / 886px 9px; column-gap: 4px; padding-left: 6px; }
.wave { width: 886px; height: 514px; background: #000; position: relative; }
.waves .vscroll { position: relative; margin-top: 1px; }
.waves .hscroll { width: 886px; }
.wave text { font-family: "DejaVu Sans Mono", monospace; font-size: 7.700px; fill: #f0f0f0; }

.vm-status { height: 19px; flex: none; display: flex; align-items: center; justify-content: flex-end; gap: 3px; padding-right: 1px; background: #3b3c3e; border-bottom: 1px solid #4a4846; color: #e2e2e2; }
.vm-status svg { width: 13px; height: 12px; }
.vm-status span { width: 41.500px; margin-left: -1px; font-size: 10px; letter-spacing: -.16px; }

/* Host taskbar */
.taskbar { flex: 1; display: flex; position: relative; background: #202020; color: #f2f2f2; }
.widget { width: 372px; display: flex; padding: 3px 0 0 17px; gap: 2px; }
.widget svg { width: 24px; height: 26px; }
.widget-text { display: flex; flex-direction: column; line-height: 13px; padding-top: 3px; font-size: 10px; letter-spacing: -.15px; }
.sub { color: #bbb; }
.badge-text { font: 10px "Open Sans", sans-serif; fill: #2a1515; }
.badge-text.tight { font-size: 9px; letter-spacing: -.4px; }
.task-center { display: flex; align-items: flex-start; padding-top: 6px; }
.start { width: 20px; height: 20px; margin-top: 4px; }
.search { width: 184px; height: 27px; margin-left: 10px; border: 1px solid #4b4b4b; border-radius: 14px; background: #3a3a3a; display: flex; align-items: center; padding-left: 10px; font-size: 11px; color: #ddd; }
.lens { width: 12px; height: 12px; margin-right: 8px; }
.squirrel { width: 43px; height: 24px; margin-left: auto; margin-right: 2px; }
.apps { display: flex; margin-left: 1.500px; }
.apps div { width: 36.700px; height: 31px; display: flex; justify-content: center; position: relative; padding-top: 3px; }
.apps svg { width: 20px; height: 20px; }
.apps svg.wide { width: 25px; height: 25px; margin-top: -5px; margin-left: 5px; }
.apps .open::after { content: ""; position: absolute; left: 16px; top: 26px; width: 5px; height: 2px; border-radius: 1px; background: #a8a8a8; }
.tray { position: absolute; right: 0; top: 0; width: 271px; height: 39px; display: flex; align-items: center; }
.tray div { display: flex; flex-direction: column; line-height: 13px; font-size: 10px; }
.t-up { width: 12px; height: 12px; }
.t-sync { width: 15px; height: 15px; margin-left: 13px; }
.t-cloud { width: 14px; height: 14px; margin-left: 13px; }
.tray .lang { width: 24px; margin-left: 13px; align-items: center; }
.t-wifi { width: 12px; height: 12px; margin-left: 13px; }
.t-sound { width: 14px; height: 14px; margin-left: 7px; }
.t-bat { width: 14px; height: 14px; margin-left: 6px; }
.tray .datetime { margin-left: auto; align-items: flex-end; letter-spacing: -.1px; }
.t-bell { width: 12px; height: 14px; margin: 0 17px 0 7px; }
```

FILE: waves.js
```js
(function () {
  const NS = "http://www.w3.org/2000/svg";
  const svg = document.getElementById("wave");
  const LEFT = 376, RIGHT = 1262, TOP = 129, BOTTOM = 643;
  const GREEN = "#1f8a2a", BRIGHT = "#2fc43a", DIM = "#0f5a1e", BLUE = "#20206a", SEP = "#15184a", RED = "#b01418";

  function add(name, attrs, text) {
    const el = document.createElementNS(NS, name);
    for (const key in attrs) el.setAttribute(key, attrs[key]);
    if (text) el.textContent = text;
    svg.appendChild(el);
  }
  function box(x, y, width, height, fill) {
    add("rect", { x, y, width, height, fill, "shape-rendering": "crispEdges" });
  }
  function label(x, y, text) {
    add("text", { x, y, textLength: text.length * 4.08, lengthAdjust: "spacingAndGlyphs" }, text);
  }

  // Time ruler
  box(LEFT, 136, RIGHT - LEFT, 1, BLUE);
  for (let i = 0; i < 133; i++) {
    box(Math.round(382 + i * 6.667), 137, 1, i % 3 === 0 ? 6 : 4, "#26267a");
  }
  [[40, 509], [45, 642], [50, 775], [55, 909], [60, 1042], [65, 1175]].forEach(([t, x]) => {
    const top = t === 40 || t === 50 ? 137 : TOP;
    box(x, top, 1, BOTTOM - top, t === 45 || t === 60 ? "#24247a" : "#1e1e66");
    label(x - 12, 135.2, String(t));
    label(x, 135.2, "sec");
  });
  label(376, 135.2, "sec");

  // Clock trace
  const edges = [402, 482, 562, 642, 722, 802, 882, 962, 1042, 1122, 1202];
  let x0 = LEFT, high = false;
  edges.concat(RIGHT).forEach((x) => {
    box(x0, high ? 145 : 155, x - x0, 1, high ? GREEN : DIM);
    if (x < RIGHT) box(x, 145, 1, 11, BRIGHT);
    x0 = x;
    high = !high;
  });
  box(LEFT, 156, RIGHT - LEFT, 1, SEP);

  // Bus traces
  const ir = [[376, "0230A+"], [402, "02513480"], [562, "0240C500"], [722, "02415580"], [882, "00520600"], [1042, "00209181"], [1202, "00208681"]];
  const buses = [
    ir, ir,
    [[376, "00000+"], [402, "00000001"], [562, "00000002"], [722, "00000004"], [882, "00000001"], [1202, "00000000"]],
    [[376, "00000+"], [402, "00000004"], [722, "00000005"], [882, "00000002"], [1202, "xxxxxxxx"]],
    [[376, "00000+"], [402, "00000007"], [562, "00000005"], [722, "00000001"], [882, "00000009"], [1042, "00000003"]]
  ];
  buses.forEach((bus, row) => {
    const y = 159 + row * 14;
    box(LEFT, y + 11, RIGHT - LEFT, 1, SEP);
    bus.forEach(([x, value], i) => {
      const start = x + (i ? 1 : 0);
      const end = i + 1 < bus.length ? bus[i + 1][0] : RIGHT;
      const unknown = value[0] === "x";
      const color = unknown ? RED : GREEN;
      box(start, y, end - start, 1, color);
      box(start, y + 10, end - start, 1, color);
      if (i) {
        box(x - 1, y, 1, 11, DIM);
        box(x + 1, y, 1, 11, unknown ? RED : DIM);
        box(x, y + 4, 1, 3, unknown ? "#e02020" : BRIGHT);
      }
      label(x + (i ? 1.6 : 0.8), y + 8.1, value);
    });
  });

  box(LEFT, 137, 1, BOTTOM - 137, SEP);
  box(775, 143, 1, BOTTOM - 143, "#b8764e");
})();
```
